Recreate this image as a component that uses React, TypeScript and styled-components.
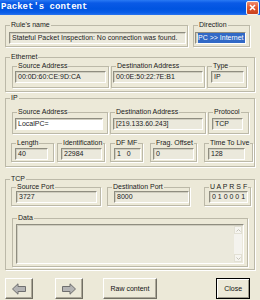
import React from "react";
import styled, { createGlobalStyle } from "styled-components";

const GlobalStyle = createGlobalStyle`
  html, body {
    margin: 0;
    padding: 0;
  }
  body {
    background: #ece9d8;
    font-family: "Liberation Sans", Arial, sans-serif;
  }
`;

const Window = styled.div`
  width: 260px;
  height: 300px;
  overflow: hidden;
  background: #ece9d8;
  display: flex;
  flex-direction: column;
`;

const TitleBar = styled.div`
  height: 15px;
  flex: none;
  display: flex;
  align-items: center;
  justify-content: space-between;
  padding: 0 1px 0 1px;
  background: linear-gradient(#2a7af4 0%, #0a5ae6 20%, #0054e0 60%, #0a5ee8 85%, #2a74ee 100%);
`;

const Title = styled.span`
  font-family: "Liberation Mono", "DejaVu Sans Mono", monospace;
  font-weight: bold;
  font-size: 9px;
  color: #ffffff;
  line-height: 15px;
`;

const CloseBox = styled.div`
  width: 11px;
  height: 12px;
  border: 1px solid #f4f0ee;
  border-radius: 2px;
  background: linear-gradient(#f08a6c, #e0552c 50%, #c8401e);
  display: flex;
  align-items: center;
  justify-content: center;
`;

const Body = styled.div`
  padding: 6px 0 0 5px;
  display: flex;
  flex-direction: column;
`;

const Row = styled.div<{ $mt?: number }>`
  display: flex;
  margin-top: ${(p) => p.$mt ?? 0}px;
`;

const Group = styled.fieldset<{ $w: number; $ml?: number; $mt?: number }>`
  box-sizing: border-box;
  width: ${(p) => p.$w}px;
  min-width: 0;
  margin: ${(p) => p.$mt ?? 0}px 0 0 ${(p) => p.$ml ?? 0}px;
  padding: 0;
  border: 1px solid #bcb9a8;
  box-shadow: 1px 1px 0 #ffffff;
`;

const Legend = styled.legend`
  margin-left: 4px;
  padding: 0 1px;
  font-size: 7px;
  line-height: 8px;
  color: #1a1a1a;
  white-space: nowrap;
`;

const Inner = styled.div<{ $pad: string; $col?: boolean }>`
  display: flex;
  flex-direction: ${(p) => (p.$col ? "column" : "row")};
  padding: ${(p) => p.$pad};
`;

const Field = styled.div<{ $white?: boolean; $w?: number; $h?: number }>`
  box-sizing: border-box;
  height: ${(p) => p.$h ?? 12}px;
  width: ${(p) => (p.$w ? `${p.$w}px` : "100%")};
  flex: ${(p) => (p.$w ? "none" : "1")};
  background: ${(p) => (p.$white ? "#ffffff" : "#ebe9dc")};
  border: 1px solid;
  border-color: #8f8d80 #ffffff #ffffff #8f8d80;
  box-shadow: inset 1px 1px 0 #cfcdbf;
  padding: 0 2px;
  font-size: 7px;
  line-height: 10px;
  color: #222222;
  white-space: nowrap;
  overflow: hidden;
  display: flex;
`;

const Selected = styled.span`
  background: #3169c6;
  color: #ffffff;
  padding-right: 1px;
`;

const DataArea = styled.div`
  flex: 1;
`;

const ScrollBar = styled.div`
  width: 8px;
  display: flex;
  flex-direction: column;
  justify-content: space-between;
  background: #f4f3ee;
`;

const ScrollArrow = styled.div`
  height: 8px;
  border: 1px solid #e2e0d4;
  box-sizing: border-box;
  background: #f6f5f0;
  display: flex;
  align-items: center;
  justify-content: center;
`;

const ButtonRow = styled.div`
  display: flex;
  margin-top: 8px;
  padding-right: 10px;
`;

const Btn = styled.button<{ $w: number; $ml?: number; $default?: boolean }>`
  box-sizing: border-box;
  width: ${(p) => p.$w}px;
  height: 21px;
  margin-left: ${(p) => p.$ml ?? 0}px;
  padding: 0;
  background: #ece9d8;
  border: 1px solid;
  border-color: ${(p) => (p.$default ? "#000000" : "#ffffff #716f64 #716f64 #ffffff")};
  box-shadow: ${(p) =>
    p.$default
      ? "inset 1px 1px 0 #ffffff, inset -1px -1px 0 #9d9a8a"
      : "inset -1px -1px 0 #aca899"};
  font-family: "Liberation Sans", Arial, sans-serif;
  font-size: 7px;
  color: #111111;
  display: flex;
  align-items: center;
  justify-content: center;
`;

const Arrow = ({ dir }: { dir: "left" | "right" }) => (
  <svg width="14" height="12" viewBox="0 0 14 12">
    <path
      d="M0.5 6 L6 0.8 L6 3.5 L13.5 3.5 L13.5 8.5 L6 8.5 L6 11.2 Z"
      fill="#b4b4b4"
      stroke="#6f6f6f"
      strokeWidth="1"
      transform={dir === "right" ? "translate(14 0) scale(-1 1)" : undefined}
    />
  </svg>
);

const Chevron = ({ up }: { up?: boolean }) => (
  <svg width="5" height="3" viewBox="0 0 5 3">
    <path d={up ? "M0.5 2.5 L2.5 0.5 L4.5 2.5" : "M0.5 0.5 L2.5 2.5 L4.5 0.5"} fill="none" stroke="#c4c2b8" strokeWidth="1" />
  </svg>
);

export default function App() {
  return (
    <>
      <GlobalStyle />
      <Window>
        <TitleBar>
          <Title>Packet's content</Title>
          <CloseBox>
            <svg width="7" height="7" viewBox="0 0 7 7">
              <path d="M1 1 L6 6 M6 1 L1 6" stroke="#ffffff" strokeWidth="1.6" />
            </svg>
          </CloseBox>
        </TitleBar>
        <Body>
          <Row>
            <Group $w={183}>
              <Legend>Rule's name</Legend>
              <Inner $pad="3px 1px 2px 3px">
                <Field>Stateful Packet Inspection: No connection was found.</Field>
              </Inner>
            </Group>
            <Group $w={57} $ml={5}>
              <Legend>Direction</Legend>
              <Inner $pad="3px 3px 2px 1px">
                <Field>
                  <Selected>PC &gt;&gt; Internet</Selected>
                </Field>
              </Inner>
            </Group>
          </Row>

          <Group $w={250} $mt={6}>
            <Legend>Ethernet</Legend>
            <Inner $pad="1px 0 3px 6px">
              <Group $w={97}>
                <Legend>Source Address</Legend>
                <Inner $pad="1px 2px 4px 2px">
                  <Field>00:0D:60:CE:9D:CA</Field>
                </Inner>
              </Group>
              <Group $w={94} $ml={2}>
                <Legend>Destination Address</Legend>
                <Inner $pad="1px 1px 4px 1px">
                  <Field>00:0E:50:22:7E:B1</Field>
                </Inner>
              </Group>
              <Group $w={40} $ml={2}>
                <Legend>Type</Legend>
                <Inner $pad="1px 2px 4px 3px">
                  <Field>IP</Field>
                </Inner>
              </Group>
            </Inner>
          </Group>

          <Group $w={250} $mt={2}>
            <Legend>IP</Legend>
            <Inner $pad="6px 0 4px 5px" $col>
              <Row>
                <Group $w={96} $ml={1}>
                  <Legend>Source Address</Legend>
                  <Inner $pad="2px 4px 3px 2px">
                    <Field $white>LocalPC=</Field>
                  </Inner>
                </Group>
                <Group $w={96} $ml={2}>
                  <Legend>Destination Address</Legend>
                  <Inner $pad="2px 2px 3px 2px">
                    <Field>[219.133.60.243]</Field>
                  </Inner>
                </Group>
                <Group $w={41} $ml={2}>
                  <Legend>Protocol</Legend>
                  <Inner $pad="2px 5px 3px 3px">
                    <Field>TCP</Field>
                  </Inner>
                </Group>
              </Row>
              <Row $mt={5}>
                <Group $w={43}>
                  <Legend>Length</Legend>
                  <Inner $pad="1px 5px 1px 3px">
                    <Field>40</Field>
                  </Inner>
                </Group>
                <Group $w={48} $ml={3}>
                  <Legend>Identification</Legend>
                  <Inner $pad="1px 2px 1px 3px">
                    <Field>22984</Field>
                  </Inner>
                </Group>
                <Group $w={33} $ml={5}>
                  <Legend>DF MF</Legend>
                  <Inner $pad="1px 1px 1px 3px">
                    <Field>1&nbsp;&nbsp;&nbsp;0</Field>
                  </Inner>
                </Group>
                <Group $w={47} $ml={7}>
                  <Legend>Frag. Offset</Legend>
                  <Inner $pad="1px 2px 1px 2px">
                    <Field>0</Field>
                  </Inner>
                </Group>
                <Group $w={49} $ml={7}>
                  <Legend>Time To Live</Legend>
                  <Inner $pad="1px 0 1px 3px">
                    <Field $w={37}>128</Field>
                  </Inner>
                </Group>
              </Row>
            </Inner>
          </Group>

          <Group $w={250} $mt={8}>
            <Legend>TCP</Legend>
            <Inner $pad="0 0 2px 5px" $col>
              <Row>
                <Group $w={90}>
                  <Legend>Source Port</Legend>
                  <Inner $pad="0 3px 2px 4px">
                    <Field>3727</Field>
                  </Inner>
                </Group>
                <Group $w={83} $ml={6}>
                  <Legend>Destination Port</Legend>
                  <Inner $pad="0 0 2px 6px">
                    <Field>8000</Field>
                  </Inner>
                </Group>
                <Group $w={47} $ml={14}>
                  <Legend>U A P R S F</Legend>
                  <Inner $pad="0 2px 2px 4px">
                    <Field>0 1 0 0 0 1</Field>
                  </Inner>
                </Group>
              </Row>
              <Group $w={236} $ml={1} $mt={8}>
                <Legend>Data</Legend>
                <Inner $pad="2px 3px 2px 3px">
                  <Field $h={40} style={{ padding: 1 }}>
                    <DataArea />
                    <ScrollBar>
                      <ScrollArrow>
                        <Chevron up />
                      </ScrollArrow>
                      <ScrollArrow>
                        <Chevron />
                      </ScrollArrow>
                    </ScrollBar>
                  </Field>
                </Inner>
              </Group>
            </Inner>
          </Group>

          <ButtonRow>
            <Btn $w={28}>
              <Arrow dir="left" />
            </Btn>
            <Btn $w={28} $ml={22}>
              <Arrow dir="right" />
            </Btn>
            <Btn $w={55} $ml={20}>Raw content</Btn>
            <Btn $w={34} $ml={59} $default>
              Close
            </Btn>
          </ButtonRow>
        </Body>
      </Window>
    </>
  );
}
